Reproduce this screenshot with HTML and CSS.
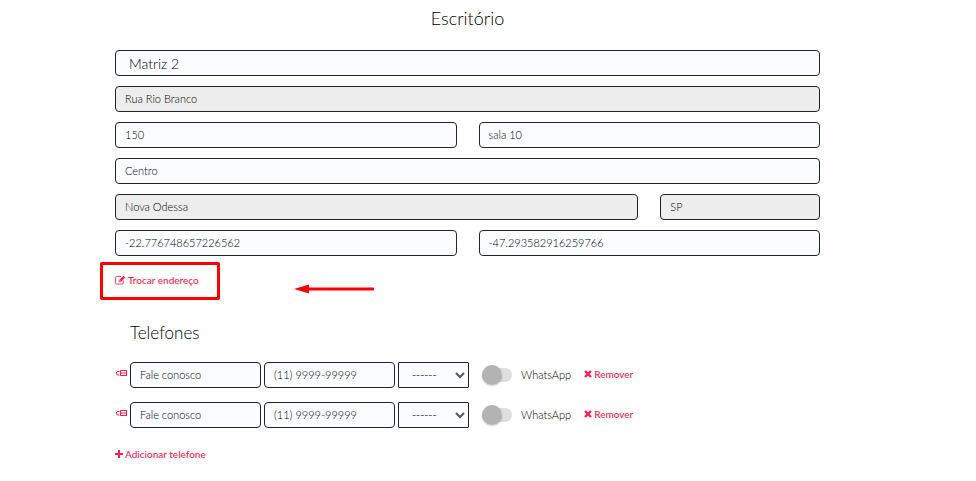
FILE: index.html
```
<!DOCTYPE html>
<html lang="pt-BR">
    <head>
        <meta charset="UTF-8">
        <meta name="viewport" content="width=device-width, initial-scale=1.0">
        <title>Escritório</title>
        <link rel="stylesheet" href="styles.css">
    </head>
    <body>
        <!-- ícones -->
        <svg class="sprite">
            <symbol id="icon-edit" viewBox="0 0 20 18">
                <path d="M15 10v4.500a2 2 0 0 1-2 2H3a2 2 0 0 1-2-2v-10a2 2 0 0 1 2-2h8" fill="none" stroke="currentColor" stroke-width="1.500"/>
                <path d="M15.500 1.200l3.300 3.300-8.800 8.800H6.700V10zM8 10.500v1.700h1.600l1-1-1.700-1.600z" fill="currentColor" fill-rule="evenodd"/>
            </symbol>
            <symbol id="icon-hand" viewBox="0 0 12 8">
                <path d="M4.500 2.500H3a1.500 1.500 0 0 0 0 3.500h1.500" fill="none" stroke="currentColor"/>
                <path d="M5.500 1.500H12M5 4h7M5.500 6.500H12M5.500 1.500v5M11.500 1v6" fill="none" stroke="currentColor"/>
            </symbol>
            <symbol id="icon-times" viewBox="0 0 8 8">
                <path d="M1 1l6 6M7 1l-6 6" fill="none" stroke="currentColor" stroke-width="2.400"/>
            </symbol>
            <symbol id="icon-plus" viewBox="0 0 8 8">
                <path d="M4 0v8M0 4h8" fill="none" stroke="currentColor" stroke-width="2"/>
            </symbol>
        </svg>
        <form class="office">
            <h1>Escritório</h1>
            <div class="address">
                <input class="field full name" type="text" value="Matriz 2" aria-label="Nome">
                <input class="field full" type="text" value="Rua Rio Branco" aria-label="Rua" readonly>
                <input class="field half" type="text" value="150" aria-label="Número">
                <input class="field half" type="text" value="sala 10" aria-label="Complemento">
                <input class="field full" type="text" value="Centro" aria-label="Bairro">
                <input class="field city" type="text" value="Nova Odessa" aria-label="Cidade" readonly>
                <input class="field state" type="text" value="SP" aria-label="Estado" readonly>
                <input class="field half" type="text" value="-22.776748657226562" aria-label="Latitude">
                <input class="field half" type="text" value="-47.293582916259766" aria-label="Longitude">
            </div>
            <div class="change">
                <a class="action" href="#"><svg class="icon-edit"><use href="#icon-edit"/></svg>Trocar endereço</a>
                <span class="highlight"></span>
                <svg class="arrow" viewBox="0 0 80 10">
                    <path d="M12 5h67" stroke="#f00" stroke-width="3" stroke-linecap="round"/>
                    <path d="M0 5L15 0.500v9z" fill="#f00"/>
                </svg>
            </div>

            <h2>Telefones</h2>
            <div class="phone">
                <svg class="icon-hand"><use href="#icon-hand"/></svg>
                <input class="field text" type="text" value="Fale conosco" aria-label="Descrição">
                <input class="field text" type="text" value="(11) 9999-99999" aria-label="Telefone">
                <select class="field" aria-label="Tipo"><option>------</option></select>
                <label class="switch"><input type="checkbox"><span>WhatsApp</span></label>
                <a class="action" href="#"><svg class="icon-small"><use href="#icon-times"/></svg>Remover</a>
            </div>
            <div class="phone">
                <svg class="icon-hand"><use href="#icon-hand"/></svg>
                <input class="field text" type="text" value="Fale conosco" aria-label="Descrição">
                <input class="field text" type="text" value="(11) 9999-99999" aria-label="Telefone">
                <select class="field" aria-label="Tipo"><option>------</option></select>
                <label class="switch"><input type="checkbox"><span>WhatsApp</span></label>
                <a class="action" href="#"><svg class="icon-small"><use href="#icon-times"/></svg>Remover</a>
            </div>
            <a class="action add" href="#"><svg class="icon-small"><use href="#icon-plus"/></svg>Adicionar telefone</a>
        </form>
    </body>
</html>
```
FILE: styles.css
```
*{
    margin: 0;
    padding: 0;
    box-sizing: border-box;
}
body{
    background-color: #fefefe;
    color: #000;
    font-family: Lato, "Liberation Sans", sans-serif;
    font-size: 11px;
    font-weight: 300;
}
.sprite{
    display: none;
}
.office{
    padding: 7px 156px 16px 115px;
}
h1, h2{
    font-size: 17px;
    font-weight: 300;
    line-height: 22px;
}
h1{
    margin-bottom: 21px;
    font-size: 18px;
    text-align: center;
}
h2{
    margin: 34px 0 18px 15px;
}
/* campos */
.field{
    width: 100%;
    height: 26px;
    padding: 0 9px 2px;
    border: 1px solid #212529;
    border-radius: 4px;
    background-color: #fbfcff;
    color: #000;
    font-family: inherit;
    font-size: 11px;
    font-weight: 300;
}
.field[readonly]{
    background-color: #ededed;
}
.address{
    display: grid;
    grid-template-columns: repeat(12, 1fr);
    gap: 10px 22px;
}
.full{
    grid-column: span 12;
}
.half{
    grid-column: span 6;
}
.city{
    grid-column: span 9;
}
.state{
    grid-column: span 3;
}
.name{
    padding: 0 13px;
    font-size: 14px;
}
/* links */
.action{
    display: inline-flex;
    align-items: center;
    color: #fb1f4d;
    font-size: 10px;
    font-weight: 500;
    line-height: 16px;
    text-decoration: none;
}
.icon-edit{
    width: 11px;
    height: 10px;
    margin-right: 2px;
}
.icon-small{
    width: 8px;
    height: 8px;
    margin-right: 2px;
}
.change{
    display: flex;
    position: relative;
    margin-top: 16px;
}
/* destaque em volta do link */
.highlight{
    position: absolute;
    left: -15px;
    top: -10px;
    width: 120px;
    height: 38px;
    border: 3px solid #f00;
    border-radius: 2px;
    pointer-events: none;
}
.arrow{
    position: absolute;
    left: 179px;
    top: 12px;
    width: 80px;
    height: 10px;
}
/* telefones */
.phone{
    display: flex;
    align-items: center;
    gap: 3px;
    margin-bottom: 14px;
}
.icon-hand{
    width: 12px;
    height: 8px;
    margin-bottom: 4px;
    color: #fb1f4d;
}
.phone .text{
    width: 131px;
}
.phone select{
    width: 71px;
    border-radius: 1px;
    color: #555;
    font-weight: 400;
}
.phone .action{
    padding-bottom: 2px;
}
.add{
    margin-top: 4px;
}
.switch{
    display: flex;
    align-items: center;
    gap: 9px;
    margin: 0 10px;
}
.switch span{
    padding-bottom: 2px;
}
.switch input{
    appearance: none;
    position: relative;
    width: 30px;
    height: 14px;
    border-radius: 7px;
    background-color: #dedede;
}
.switch input::before{
    content: "";
    position: absolute;
    left: 0;
    top: -3px;
    width: 20px;
    height: 20px;
    border-radius: 50%;
    background-color: #b3b3b3;
    box-shadow: 0 1px 2px rgba(0, 0, 0, 0.2);
}
```
